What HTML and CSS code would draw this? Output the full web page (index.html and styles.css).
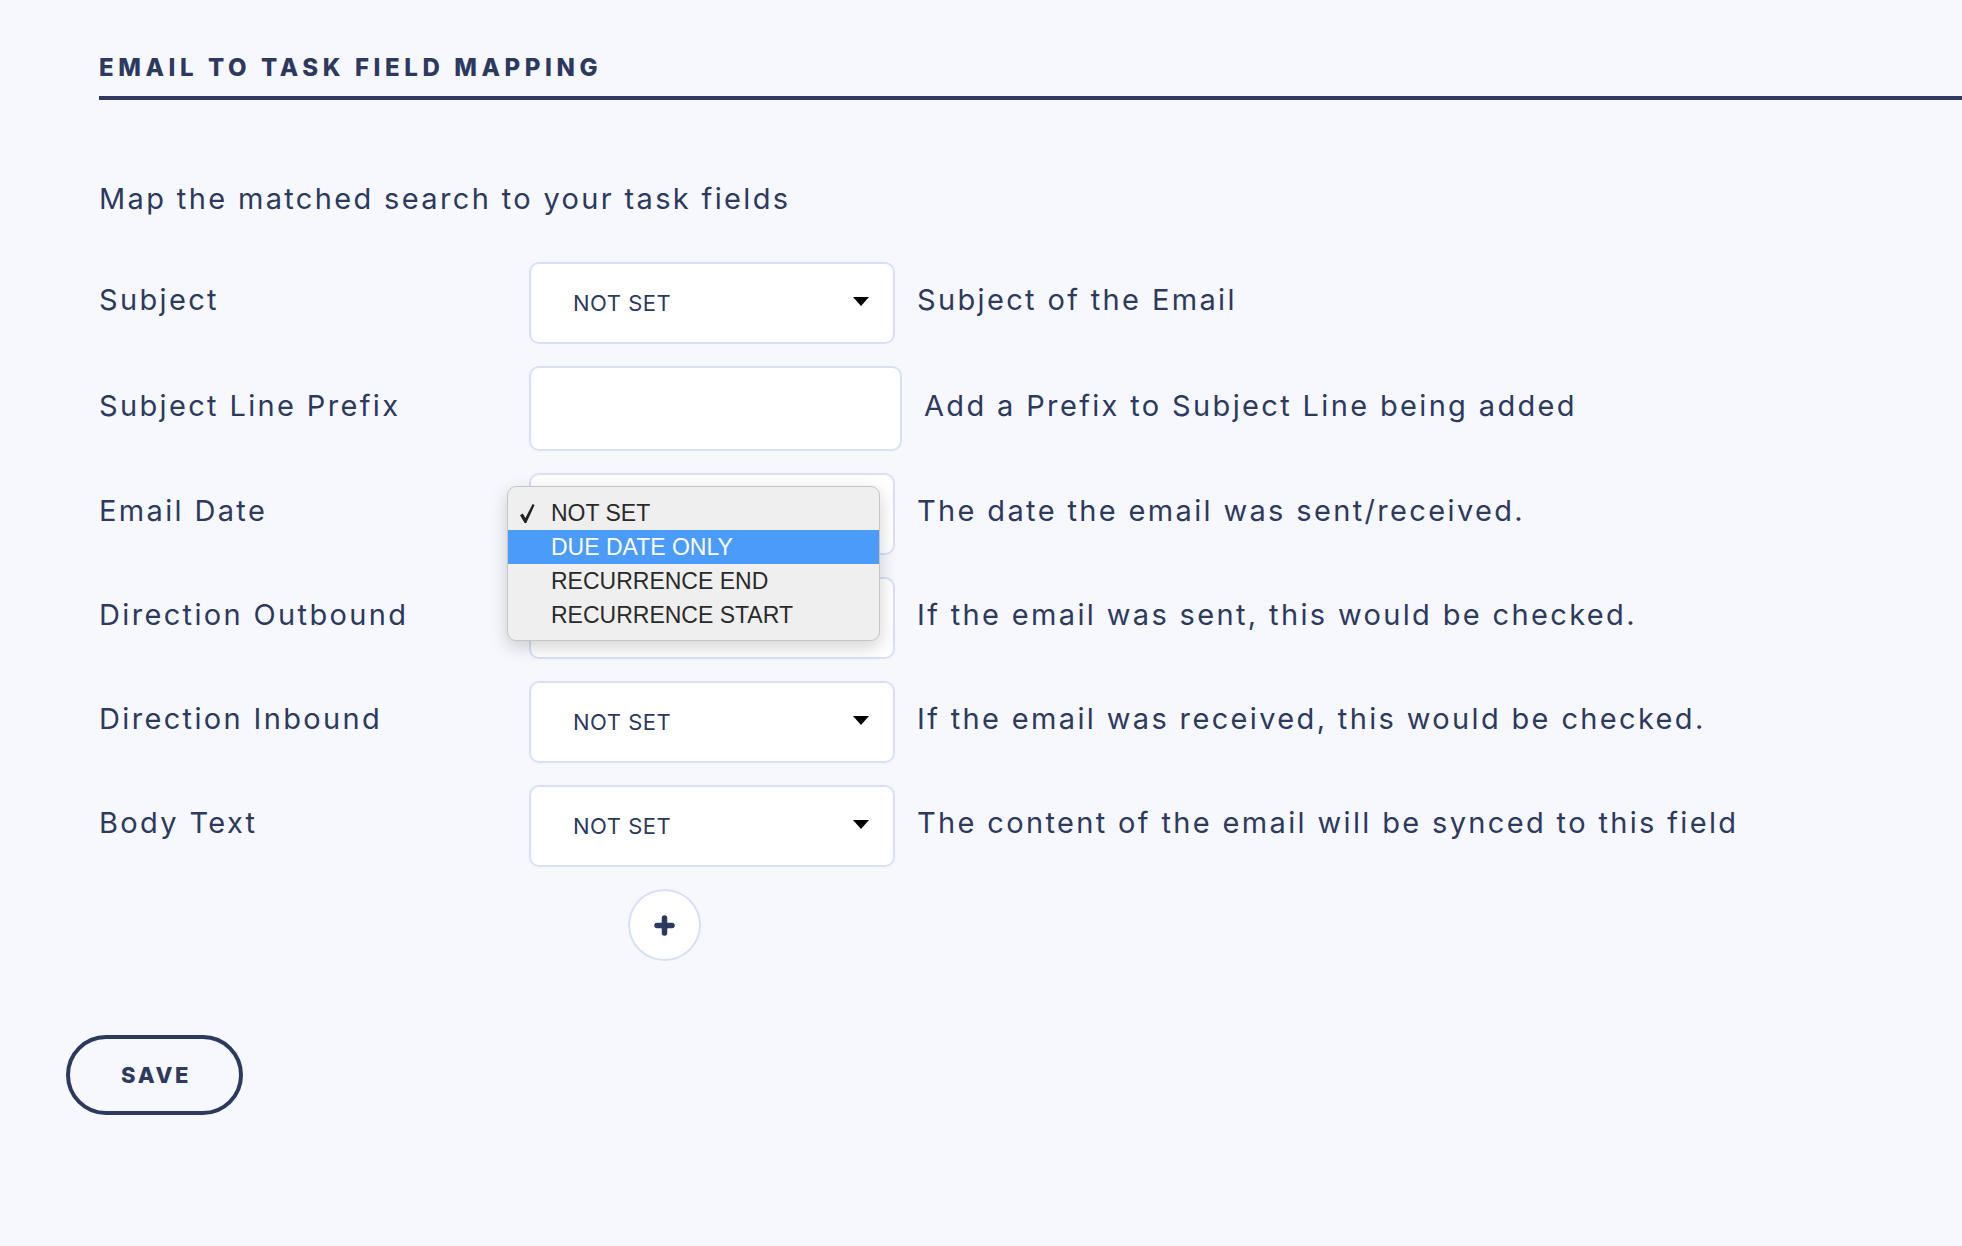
FILE: index.html
```html
<!DOCTYPE html>
<html lang="en">

<head>
    <meta charset="utf-8">
    <title>Email to Task Field Mapping</title>
    <link rel="stylesheet" href="styles.css">
</head>

<body>
    <div class="page">
        <div class="section">
            <h2 class="section-title">Email to Task Field Mapping</h2>

            <p class="intro">Map the matched search to your task fields</p>

            <div class="rows">
                <div class="row">
                    <div class="label">Subject</div>
                    <div class="select">
                        <span>NOT SET</span>
                        <svg class="caret" width="16" height="9" viewBox="0 0 16 9"><path d="M0 0h16L8 9z"/></svg>
                    </div>
                    <div class="desc">Subject of the Email</div>
                </div>

                <div class="row">
                    <div class="label">Subject Line Prefix</div>
                    <input class="text-input" type="text">
                    <div class="desc">Add a Prefix to Subject Line being added</div>
                </div>

                <div class="row">
                    <div class="label">Email Date</div>
                    <div class="select open">
                        <span class="current">NOT SET</span>
                        <svg class="caret" width="16" height="9" viewBox="0 0 16 9"><path d="M0 0h16L8 9z"/></svg>
                        <!-- 열린 드롭다운 메뉴 -->
                        <ul class="menu">
                            <li class="checked">
                                <svg class="check" width="15" height="19" viewBox="0 0 15 19"><path d="M0 11.2L2.8 9.6 5.4 14 12.6 0 14.6 1.1 6.3 19H4.6z"/></svg>
                                NOT SET
                            </li>
                            <li class="active">DUE DATE ONLY</li>
                            <li>RECURRENCE END</li>
                            <li>RECURRENCE START</li>
                        </ul>
                    </div>
                    <div class="desc">The date the email was sent/received.</div>
                </div>

                <div class="row">
                    <div class="label">Direction Outbound</div>
                    <div class="select">
                        <span>NOT SET</span>
                        <svg class="caret" width="16" height="9" viewBox="0 0 16 9"><path d="M0 0h16L8 9z"/></svg>
                    </div>
                    <div class="desc">If the email was sent, this would be checked.</div>
                </div>

                <div class="row">
                    <div class="label">Direction Inbound</div>
                    <div class="select">
                        <span>NOT SET</span>
                        <svg class="caret" width="16" height="9" viewBox="0 0 16 9"><path d="M0 0h16L8 9z"/></svg>
                    </div>
                    <div class="desc">If the email was received, this would be checked.</div>
                </div>

                <div class="row">
                    <div class="label">Body Text</div>
                    <div class="select">
                        <span>NOT SET</span>
                        <svg class="caret" width="16" height="9" viewBox="0 0 16 9"><path d="M0 0h16L8 9z"/></svg>
                    </div>
                    <div class="desc">The content of the email will be synced to this field</div>
                </div>
            </div>

            <div class="add-row">
                <button class="add-btn" type="button" aria-label="Add field">
                    <svg width="21" height="21" viewBox="0 0 21 21">
                        <path d="M10.5 3v15M3 10.5h15" stroke="#2d3a5f" stroke-width="5.5" stroke-linecap="round"/>
                    </svg>
                </button>
            </div>
        </div>

        <button class="save-btn" type="button">Save</button>
    </div>
</body>

</html>
```
FILE: styles.css
```css
body {
    margin: 0;
    background: #f7f8fd;
    color: #2d3a5f;
    font-family: Inter, "Noto Sans", sans-serif;
}

.page {
    padding: 53px 0 60px 66px;
}

.section {
    margin-left: 33px;
}

.section-title {
    margin: 0;
    padding-bottom: 13px;
    border-bottom: 4px solid #2e3a60;
    font-size: 24px;
    line-height: 30px;
    font-weight: 800;
    letter-spacing: 4.6px;
    text-transform: uppercase;
}

.intro {
    margin: 81px 0 0;
    font-size: 29px;
    line-height: 36px;
    letter-spacing: 2.35px;
}

.rows {
    margin-top: 45px;
    display: flex;
    flex-direction: column;
    gap: 22px;
}

.row {
    display: flex;
    align-items: center;
}

.label {
    width: 430px;
    flex-shrink: 0;
    font-size: 29px;
    line-height: 36px;
    letter-spacing: 2.35px;
    padding-bottom: 6px;
}

.desc {
    margin-left: 22px;
    font-size: 29px;
    line-height: 36px;
    letter-spacing: 2.35px;
    padding-bottom: 6px;
    white-space: nowrap;
}

.select {
    position: relative;
    box-sizing: border-box;
    width: 366px;
    height: 82px;
    padding: 0 24px 0 42px;
    display: flex;
    align-items: center;
    justify-content: space-between;
    background: #fff;
    border: 2px solid #d8e0f6;
    border-radius: 10px;
    font-size: 22px;
    letter-spacing: 0.5px;
    cursor: pointer;
}

/* 메뉴가 열려 있으면 현재 값은 메뉴 뒤에 가려짐 */
.select.open .current {
    visibility: hidden;
}

.caret {
    fill: #000;
    margin-top: -3px;
}

.text-input {
    box-sizing: border-box;
    width: 373px;
    height: 85px;
    margin: 0;
    background: #fff;
    border: 2px solid #d8e0f6;
    border-radius: 10px;
    font-family: inherit;
    font-size: 22px;
}

.menu {
    position: absolute;
    left: -24px;
    top: 11px;
    z-index: 5;
    width: 373px;
    box-sizing: border-box;
    margin: 0;
    padding: 9px 0 8px;
    list-style: none;
    background: #efefef;
    border: 1px solid #c6c6c6;
    border-radius: 9px;
    box-shadow: 0 6px 18px rgba(0, 0, 0, 0.18);
    font-family: "Liberation Sans", Arial, sans-serif;
    font-size: 23px;
    letter-spacing: 0;
    color: #2a2a2a;
}

.menu li {
    position: relative;
    height: 34px;
    line-height: 34px;
    padding-left: 43px;
}

.menu li.active {
    background: #4b9bfb;
    color: #fff;
}

.menu .check {
    position: absolute;
    left: 12px;
    top: 8px;
    fill: #222;
}

.add-row {
    margin-top: 22px;
    padding-left: 529px;
}

.add-btn {
    width: 73px;
    height: 72px;
    padding: 0;
    display: flex;
    align-items: center;
    justify-content: center;
    background: #fff;
    border: 2px solid #d8e0f6;
    border-radius: 50%;
    cursor: pointer;
}

.save-btn {
    margin-top: 74px;
    box-sizing: border-box;
    width: 177px;
    height: 80px;
    padding: 0 0 0 3px;
    background: transparent;
    border: 4px solid #2d3a5f;
    border-radius: 40px;
    color: #2d3a5f;
    font-family: Inter, sans-serif;
    font-size: 22px;
    font-weight: 800;
    letter-spacing: 2.6px;
    text-transform: uppercase;
    cursor: pointer;
}
```
